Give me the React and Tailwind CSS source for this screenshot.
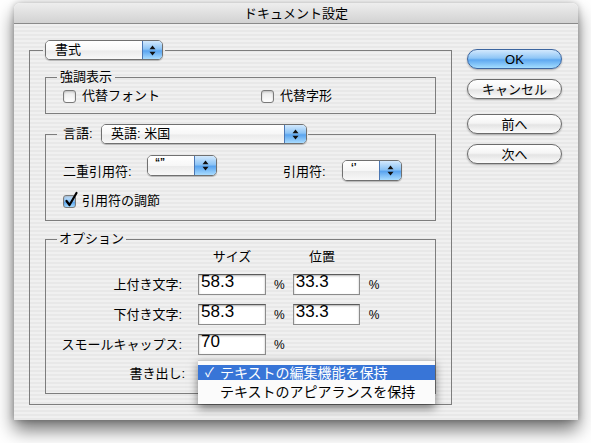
import React from 'react';

// Small up/down arrow pair used inside the aqua popup buttons
const PopupArrows = () => (
  <svg width="7" height="11" viewBox="0 0 7 11">
    <path d="M3.5 0.5L6.5 4.2H0.5Z M3.5 10.5L0.5 6.8H6.5Z" fill="#111" />
  </svg>
);

const Popup = ({ label, width, height = 'h-[20px]', blue = 'w-[20px]', textClass = 'pl-[8px] text-[13px]' }) => (
  <div className={`flex ${width} ${height} rounded-[5px] border border-[#707070] overflow-hidden shadow-[0_1px_1px_rgba(0,0,0,0.25)]`}>
    <div className={`flex-1 flex items-center bg-[linear-gradient(#ffffff,#f7f7f7_50%,#ebebeb_55%,#f8f8f8)] ${textClass}`}>
      {label}
    </div>
    <div className={`${blue} flex items-center justify-center border-l border-[#4b77b3] bg-[linear-gradient(#d3e9fd,#8cc4f6_45%,#5aa4ef_55%,#a9dcff)]`}>
      <PopupArrows />
    </div>
  </div>
);

const Checkbox = ({ checked }) => (
  <span
    className={`relative inline-block shrink-0 w-[13px] h-[13px] rounded-[3px] border border-[#7a7a7a] shadow-[inset_0_1px_2px_rgba(0,0,0,0.2)] ${
      checked
        ? 'bg-[linear-gradient(#cfe6fc,#86c0f5_50%,#5aa6f0_55%,#a6dbff)] border-[#4e78ad]'
        : 'bg-[linear-gradient(#e9e9e9,#ffffff)]'
    }`}
  >
    {checked && (
      <svg className="absolute left-[1px] top-[-4px] overflow-visible" width="13" height="15" viewBox="0 0 13 15">
        <path d="M1.5 9L4.5 13L11.5 1" fill="none" stroke="#000" strokeWidth="2.2" strokeLinecap="round" strokeLinejoin="round" />
      </svg>
    )}
  </span>
);

const Field = ({ value, width = 'w-[68px]' }) => (
  <div className={`${width} h-[21px] bg-white border border-[#8c8c8c] border-t-[#5a5a5a] shadow-[inset_0_1px_2px_rgba(0,0,0,0.3)] pl-[2px] text-[17px] leading-[13px] font-['Liberation_Sans',sans-serif]`}>
    {value}
  </div>
);

const Button = ({ children, primary, className = '' }) => (
  <button
    className={`w-[95px] h-[20px] rounded-full border flex items-center justify-center text-[13px] leading-none shadow-[0_1px_2px_rgba(0,0,0,0.3)] ${
      primary
        ? 'border-[#3d66a0] bg-[linear-gradient(#d2e8fd,#8fc6f6_45%,#5ea8f0_55%,#a4ddff)]'
        : 'border-[#6b6b6b] bg-[linear-gradient(#ffffff,#f5f5f5_45%,#e4e4e4_55%,#fbfbfb)]'
    } ${className}`}
  >
    {children}
  </button>
);

const Pct = () => <span className="w-[10px] text-[12px] font-['Liberation_Sans',sans-serif]">%</span>;

const App = () => {
  return (
    <div className="min-h-[443px] bg-white pt-[3px] pl-[14px] font-['Liberation_Sans','Noto_Sans_CJK_JP',sans-serif] text-[13px] text-black">
      {/* Window */}
      <div className="w-[564px] h-[417px] rounded-t-[6px] overflow-hidden shadow-[0_10px_18px_rgba(0,0,0,0.55),0_0_6px_rgba(0,0,0,0.25)]">
        {/* Title bar */}
        <div className="h-[21px] border-b border-[#8a8a8a] bg-[linear-gradient(#eeeeee,#d2d2d2)] flex items-center justify-center text-[13px] leading-none">
          ドキュメント設定
        </div>

        {/* Body */}
        <div className="h-[396px] flex items-start pl-[15px] pt-[16px] bg-[repeating-linear-gradient(#f0f0f0_0px,#f0f0f0_2px,#e8e8e8_2px,#e8e8e8_4px)]">
          <fieldset className="w-[423px] border border-[#7d7d7d] px-[13px] pt-[9px] pb-[10px]">
            <legend className="px-[2px]">
              <Popup label="書式" width="w-[118px]" textClass="pl-[9px] text-[13px]" />
            </legend>

            <div className="mx-[2px]">
              {/* 強調表示 */}
              <fieldset className="border border-[#7d7d7d] pl-[11px] pt-[3px] pb-[9px]">
                <legend className="px-[3px] leading-[16px]">強調表示</legend>
                <div className="flex items-center h-[16px] ml-[6px]">
                  <label className="w-[198px] flex items-center gap-[6px]">
                    <Checkbox />
                    <span>代替フォント</span>
                  </label>
                  <label className="flex items-center gap-[6px]">
                    <Checkbox />
                    <span>代替字形</span>
                  </label>
                </div>
              </fieldset>

              {/* 言語 */}
              <fieldset className="mt-[10px] border border-[#7d7d7d] pl-[11px] pt-[11px] pb-[11px]">
                <legend className="pl-[6px] pr-[1px] flex items-center">
                  <span className="w-[38px] leading-[16px]">言語:</span>
                  <Popup label="英語: 米国" width="w-[206px]" blue="w-[22px]" textClass="pl-[9px] text-[13px]" />
                </legend>
                <div className="flex items-start ml-[6px]">
                  <span className="w-[84px] mt-[9px] leading-[16px]">二重引用符:</span>
                  <Popup
                    label="“”"
                    width="w-[70px]"
                    height="h-[21px]"
                    blue="w-[22px]"
                    textClass="pl-[7px] items-start pt-[2px] text-[10px] font-bold leading-[10px]"
                  />
                  <span className="ml-[66px] w-[59px] mt-[9px] leading-[16px]">引用符:</span>
                  <div className="mt-[5px]">
                    <Popup
                      label="‘’"
                      width="w-[60px]"
                      height="h-[21px]"
                      blue="w-[22px]"
                      textClass="pl-[8px] items-start pt-[2px] text-[10px] font-bold leading-[10px]"
                    />
                  </div>
                </div>
                <label className="mt-[12px] ml-[6px] h-[16px] flex items-center gap-[6px]">
                  <Checkbox checked />
                  <span>引用符の調節</span>
                </label>
              </fieldset>

              {/* オプション */}
              <fieldset className="mt-[10px] border border-[#7d7d7d] pl-[11px] pt-[2px] pb-[9px]">
                <legend className="px-[2px] leading-[16px]">オプション</legend>
                <div className="flex h-[16px] leading-[16px]">
                  <span className="w-[125px]" />
                  <span className="ml-[16px] w-[68px] text-center">サイズ</span>
                  <span className="ml-[26px] w-[60px] text-center">位置</span>
                </div>
                {[
                  ['上付き文字:', '58.3', '33.3'],
                  ['下付き文字:', '58.3', '33.3'],
                ].map(([label, size, pos]) => (
                  <div key={label} className="mt-[9px] flex items-center">
                    <span className="w-[125px] text-right">{label}</span>
                    <div className="ml-[16px]"><Field value={size} /></div>
                    <span className="ml-[8px]"><Pct /></span>
                    <div className="ml-[8px]"><Field value={pos} width="w-[67px]" /></div>
                    <span className="ml-[9px]"><Pct /></span>
                  </div>
                ))}
                <div className="mt-[9px] flex items-center">
                  <span className="w-[125px] text-right">スモールキャップス:</span>
                  <div className="ml-[16px]"><Field value="70" /></div>
                  <span className="ml-[8px]"><Pct /></span>
                </div>
                <div className="relative mt-[9px] h-[20px] flex items-center">
                  <span className="w-[128px] text-right">書き出し:</span>

                  {/* open popup menu */}
                  <div className="absolute left-[141px] top-[-4px] z-10 w-[237px] h-[44px] pt-[4px] bg-[#fbfbfb] border-t border-[#c9c9c9] shadow-[0_4px_9px_rgba(0,0,0,0.5)] text-[14px]">
                    <div className="h-[15px] bg-[#3875d7] text-white flex items-center leading-none">
                      <span className="w-[22px] pl-[7px] text-[13px]">✓</span>
                      <span>テキストの編集機能を保持</span>
                    </div>
                    <div className="pt-[4px] h-[20px] pl-[22px] leading-[16px]">テキストのアピアランスを保持</div>
                  </div>
                </div>
              </fieldset>
            </div>
          </fieldset>

          {/* Buttons */}
          <div className="ml-[15px] mt-[9px] flex flex-col">
            <Button primary>OK</Button>
            <Button className="mt-[10px]">キャンセル</Button>
            <Button className="mt-[15px]">前へ</Button>
            <Button className="mt-[10px]">次へ</Button>
          </div>
        </div>
      </div>
    </div>
  );
};

export default App;
